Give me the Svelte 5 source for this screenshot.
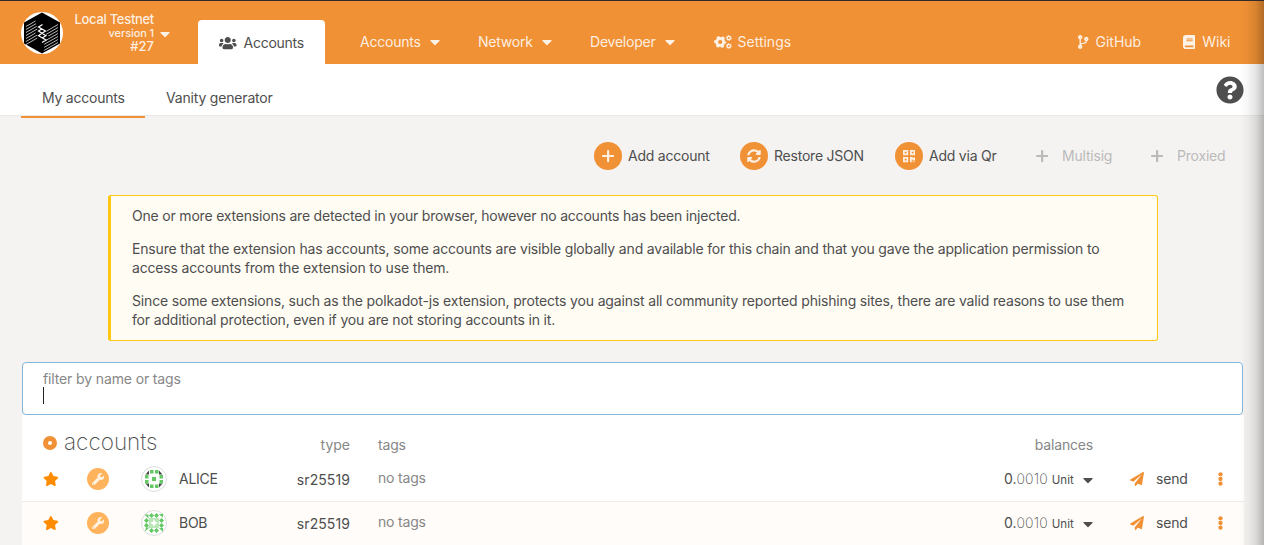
<script>
  const icons = {
    users: [640, 'M96 224c35.3 0 64-28.7 64-64s-28.7-64-64-64-64 28.7-64 64 28.7 64 64 64zm448 0c35.3 0 64-28.7 64-64s-28.7-64-64-64-64 28.7-64 64 28.7 64 64 64zm32 32h-64c-17.6 0-33.5 7.1-45.1 18.6 40.3 22.1 68.9 62 75.1 109.4h66c17.7 0 32-14.3 32-32v-32c0-35.3-28.7-64-64-64zm-256 0c61.9 0 112-50.1 112-112S381.9 32 320 32 208 82.1 208 144s50.1 112 112 112zm76.8 32h-8.3c-20.8 10-43.9 16-68.5 16s-47.6-6-68.5-16h-8.3C179.6 288 128 339.6 128 403.2V432c0 26.5 21.5 48 48 48h288c26.5 0 48-21.5 48-48v-28.8c0-63.6-51.6-115.2-115.2-115.2zm-223.7-13.4C161.5 263.1 145.6 256 128 256H64c-35.3 0-64 28.7-64 64v32c0 17.7 14.3 32 32 32h65.9c6.3-47.4 34.9-87.3 75.2-109.4z'],
    star: [576, 'M259.3 17.8L194 150.2 47.9 171.5c-26.2 3.8-36.7 36.1-17.7 54.6l105.7 103-25 145.5c-4.5 26.3 23.2 46 46.4 33.7L288 439.6l130.7 68.7c23.2 12.2 50.9-7.4 46.4-33.7l-25-145.5 105.7-103c19-18.5 8.5-50.8-17.7-54.6L382 150.2 316.7 17.8c-11.7-23.6-45.6-23.9-57.4 0z'],
    wrench: [512, 'M507.73 109.1c-2.24-9.03-13.54-12.09-20.12-5.51l-74.36 74.36-67.88-11.31-11.31-67.88 74.36-74.36c6.62-6.62 3.43-17.9-5.66-20.16-47.38-11.74-99.55.91-136.58 37.93-39.64 39.64-50.55 97.1-34.05 147.2L18.74 402.76c-24.99 24.99-24.99 65.51 0 90.5 24.99 24.99 65.51 24.99 90.5 0l213.21-213.21c50.12 16.71 107.47 5.68 147.37-34.22 37.07-37.07 49.7-89.32 37.91-136.73zM64 472c-13.25 0-24-10.75-24-24 0-13.26 10.75-24 24-24s24 10.74 24 24c0 13.25-10.75 24-24 24z'],
    plus: [448, 'M416 216H264V64c0-17.67-14.33-32-32-32h-16c-17.67 0-32 14.33-32 32v152H32c-17.67 0-32 14.33-32 32v16c0 17.67 14.33 32 32 32h152v152c0 17.67 14.33 32 32 32h16c17.67 0 32-14.33 32-32V296h152c17.67 0 32-14.33 32-32v-16c0-17.67-14.33-32-32-32z'],
    help: [512, 'M504 256c0 136.997-111.043 248-248 248S8 392.997 8 256C8 119.083 119.043 8 256 8s248 111.083 248 248zM262.655 90c-54.497 0-89.255 22.957-116.549 63.758-3.536 5.286-2.353 12.415 2.715 16.258l34.699 26.31c5.205 3.947 12.621 3.008 16.665-2.122 17.864-22.658 30.113-35.797 57.303-35.797 20.429 0 45.698 13.148 45.698 32.958 0 14.976-12.363 22.667-32.534 33.976C247.128 238.528 216 254.941 216 296v4c0 6.627 5.373 12 12 12h56c6.627 0 12-5.373 12-12v-1.333c0-28.462 83.186-29.647 83.186-106.667 0-58.002-60.165-102-116.531-102zM256 338c-25.365 0-46 20.635-46 46 0 25.364 20.635 46 46 46s46-20.636 46-46c0-25.365-20.635-46-46-46z'],
    branch: [384, 'M384 144c0-44.2-35.8-80-80-80s-80 35.8-80 80c0 36.4 24.3 67.1 57.5 76.8-.6 16.1-4.2 28.5-11 36.9-15.4 19.2-49.3 22.4-85.2 25.7-28.2 2.6-57.4 5.4-81.3 16.9v-144c32.5-10.2 56-40.5 56-76.3 0-44.2-35.8-80-80-80S0 35.8 0 80c0 35.8 23.5 66.1 56 76.3v199.3C23.5 365.9 0 396.2 0 432c0 44.2 35.8 80 80 80s80-35.8 80-80c0-34-21.2-63.1-51.2-74.6 3.1-5.2 7.8-9.8 14.9-13.4 16.2-8.2 40.4-10.4 66.1-12.8 42.2-3.9 90-8.4 118.2-43.4 14-17.4 21.1-39.8 21.6-67.9 31.6-10.8 54.4-40.7 54.4-75.9zM80 64c8.8 0 16 7.2 16 16s-7.2 16-16 16-16-7.2-16-16 7.2-16 16-16zm0 384c-8.8 0-16-7.2-16-16s7.2-16 16-16 16 7.2 16 16-7.2 16-16 16zm224-320c8.8 0 16 7.2 16 16s-7.2 16-16 16-16-7.2-16-16 7.2-16 16-16z'],
    book: [448, 'M448 360V24c0-13.3-10.7-24-24-24H96C43 0 0 43 0 96v320c0 53 43 96 96 96h328c13.3 0 24-10.7 24-24v-16c0-7.5-3.5-14.3-8.9-18.7-4.2-15.4-4.2-59.3 0-74.7 5.4-4.3 8.9-11.1 8.9-18.6zM128 134c0-3.3 2.7-6 6-6h212c3.3 0 6 2.7 6 6v20c0 3.3-2.7 6-6 6H134c-3.3 0-6-2.7-6-6v-20zm0 64c0-3.3 2.7-6 6-6h212c3.3 0 6 2.7 6 6v20c0 3.3-2.7 6-6 6H134c-3.3 0-6-2.7-6-6v-20zm253.4 250H96c-17.7 0-32-14.3-32-32 0-17.6 14.4-32 32-32h285.4c-1.9 17.1-1.9 46.9 0 64z'],
    plane: [512, 'M476 3.2L12.5 270.6c-18.1 10.4-15.8 35.6 2.2 43.2L121 358.4l287.3-253.2c5.5-4.9 13.3 2.6 8.6 8.3L176 407v80.5c0 23.6 28.5 32.9 42.5 15.8L282 426l124.6 52.2c14.2 6 30.4-2.9 33-18.2l72-432C515 7.8 493.3-6.8 476 3.2z'],
    caret: [320, 'M31.3 192h257.3c17.8 0 26.7 21.5 14.1 34.1L174.1 354.8c-7.8 7.8-20.5 7.8-28.3 0L17.2 226.1C4.6 213.5 13.5 192 31.3 192z'],
    sync: [512, 'M370.72 133.28C339.458 104.008 298.888 87.962 255.848 88c-77.458.068-144.328 53.178-162.791 126.85-1.344 5.363-6.122 9.15-11.651 9.15H24.103c-7.498 0-13.194-6.807-11.807-14.176C33.933 94.924 134.813 8 256 8c66.448 0 126.791 26.136 171.315 68.685L463.03 40.97C478.149 25.851 504 36.559 504 57.941V192c0 13.255-10.745 24-24 24H345.941c-21.382 0-32.09-25.851-16.971-40.971l41.75-41.749zM32 296h134.059c21.382 0 32.09 25.851 16.971 40.971l-41.75 41.75c31.262 29.273 71.835 45.319 114.876 45.28 77.418-.07 144.315-53.144 162.787-126.849 1.344-5.363 6.122-9.15 11.651-9.15h57.304c7.498 0 13.194 6.807 11.807 14.176C478.067 417.076 377.187 504 256 504c-66.448 0-126.791-26.136-171.315-68.685L48.97 471.03C33.851 486.149 8 475.441 8 454.059V320c0-13.255 10.745-24 24-24z'],
    qr: [448, 'M0 224h192V32H0v192zM64 96h64v64H64V96zm192-64v192h192V32H256zm128 128h-64V96h64v64zM0 480h192V288H0v192zm64-128h64v64H64v-64zm352-64h32v128h-96v-32h-32v96h-64V288h96v32h64v-32zm0 160h32v32h-32v-32zm-64 0h32v32h-32v-32z']
  };

  const menus = [
    { name: 'Accounts', width: 118 },
    { name: 'Network', width: 112 },
    { name: 'Developer', width: 123.5 }
  ];
  const actions = [
    { label: 'Add account', icon: 'plus', width: 146 },
    { label: 'Restore JSON', icon: 'sync', width: 155 },
    { label: 'Add via Qr', icon: 'qr', width: 133 },
    { label: 'Multisig', icon: 'plus', width: 115, disabled: true },
    { label: 'Proxied', icon: 'plus', width: 88, disabled: true }
  ];
  const accounts = [{ name: 'ALICE' }, { name: 'BOB' }];
  const hatch = Array.from({ length: 7 }, (_, i) => i * 3);
</script>

{#snippet icon(name, size)}
  <svg class="icon" viewBox="0 0 {icons[name][0]} 512" height={size} width={(size * icons[name][0]) / 512} fill="currentColor" aria-hidden="true">
    <path d={icons[name][1]} />
  </svg>
{/snippet}

<div class="page">
  <header>
    <div class="chain">
      <svg class="logo" width="42" height="42" viewBox="0 0 42 42" aria-hidden="true">
        <circle cx="21" cy="21" r="21" fill="#fff" />
        <path d="M21 .5L39 10.5v21L21 41.500 3 31.500v-21z" fill="#000" />
        <g stroke="#fff" stroke-width=".9">
          {#each hatch as y}
            <path d="M5 {14.500 + y}L{14.500 + Math.min(y, 9) * 0.2} {9 + y - Math.min(y, 9) * 0.11}" opacity=".8" />
            <path d="M{25.500 - Math.min(y, 12) * 0.2} {19.200 + y + Math.min(y, 12) * 0.1}L37 {12.500 + y}" opacity=".8" />
          {/each}
        </g>
        <path d="M18 14l5 3-5 4 6 4-5 4" fill="none" stroke="#000" stroke-width="5" />
        <path d="M21.500 12.500l-4 2.500 7 4-3.500 2.200-3.500-2.200 3.500-2.200M21 21.200l-3.500 2.500 7.500 4.300-4 2.500M21 21.200l4 2.500-4 2.300" fill="none" stroke="#fff" stroke-width="1.200" />
      </svg>
      <div class="chain-info">
        <div class="chain-name">Local Testnet</div>
        <div class="small">version 1</div>
        <div class="block">#27</div>
      </div>
      {@render icon('caret', 16)}
    </div>
    <div class="active-tab">{@render icon('users', 14)}<span>Accounts</span></div>
    <nav>
      {#each menus as menu}
        <div class="menu" style="width: {menu.width}px"><span>{menu.name}</span>{@render icon('caret', 16)}</div>
      {/each}
      <div class="settings">
        <svg width="18" height="14" viewBox="0 0 18 14" fill="none" stroke="currentColor" aria-hidden="true">
          <circle cx="6.200" cy="7" r="3.500" stroke-width="2.800" />
          <circle cx="6.200" cy="7" r="5.200" stroke-width="1.800" stroke-dasharray="2.700 2.745" stroke-dashoffset="1.350" />
          <circle cx="14.800" cy="3" r="1.700" stroke-width="1.300" />
          <circle cx="14.800" cy="3" r="2.500" stroke-width=".9" stroke-dasharray="1.300 1.318" />
          <circle cx="14.800" cy="11" r="1.700" stroke-width="1.300" />
          <circle cx="14.800" cy="11" r="2.500" stroke-width=".9" stroke-dasharray="1.300 1.318" />
        </svg>
        <span>Settings</span>
      </div>
    </nav>
    <div class="links">
      <div class="github">{@render icon('branch', 14)}<span>GitHub</span></div>
      <div class="wiki">{@render icon('book', 14)}<span>Wiki</span></div>
    </div>
  </header>

  <div class="tabs">
    <div class="tab selected">My accounts</div>
    <div class="tab">Vanity generator</div>
    <div class="help">{@render icon('help', 28)}</div>
  </div>

  <main>
    <div class="actions">
      {#each actions as action}
        <div class="action" class:disabled={action.disabled} style="width: {action.width}px">
          <span class="disc">{@render icon(action.icon, 14)}</span>
          <span class="label">{action.label}</span>
        </div>
      {/each}
    </div>

    <article>
      <p class="first">One or more extensions are detected in your browser, however no accounts has been injected.</p>
      <p>Ensure that the extension has accounts, some accounts are visible globally and available for this chain and that you gave the application permission to<br />access accounts from the extension to use them.</p>
      <p>Since some extensions, such as the polkadot-js extension, protects you against all community reported phishing sites, there are valid reasons to use them<br />for additional protection, even if you are not storing accounts in it.</p>
    </article>

    <div class="filter">
      <div>filter by name or tags</div>
      <div class="caret"></div>
    </div>

    <section>
      <div class="row head">
        <div class="title"><i></i><h1>accounts</h1></div>
        <div class="type">type</div>
        <div class="tags">tags</div>
        <div class="balances">balances</div>
      </div>
      {#each accounts as account, n}
        <div class="row" class:odd={n === 1}>
          <div class="star">{@render icon('star', 14)}</div>
          <div class="badge">{@render icon('wrench', 12.500)}</div>
          <svg class="identicon" width="26" height="26" viewBox="0 0 26 26" aria-hidden="true">
            <circle cx="13" cy="13" r="12.500" fill="#fff" stroke="#dcdcdc" />
            {#if n === 0}
              <path d="M4.500 8.500L8 8.500V4.500zM18 4.500v4h3.500zM4.500 17.500H8v4zM18 17.500h3.500l-3.500 4z" fill="#444" />
              <path d="M9 4h3.500v3.500H9zM14 4h3.500v3.500H14zM9 18.500h3.500V22H9zM14 18.500h3.500V22H14zM4 9h3.500v3.500H4zM4 14h3.500v3.500H4zM18.500 9H22v3.500h-3.500zM18.500 14H22v3.500h-3.500zM11 11h4v4h-4z" fill="#64c864" />
            {:else}
              <rect x="8" y="8" width="10" height="10" fill="#b8e6b6" />
              <path d="M13 9l1.200 2.800L17 13l-2.800 1.200L13 17l-1.200-2.800L9 13l2.800-1.200z" fill="#fff" />
              <path d="M3.500 4.500h4v4zM18 4.500l4-1v4zM4 21.500l1-4h3.500zM18 18h4v4z" fill="#64c864" />
              {#each [10.500, 15.500] as p}
                <path d="M{p} 3l2.500 2.500-2.500 2.500-2.500-2.500zM{p} 18l2.500 2.500-2.500 2.500-2.500-2.500zM5.500 {p - 2.500}l2.500 2.500-2.500 2.500-2.500-2.500zM20.500 {p - 2.500}l2.500 2.500-2.500 2.500-2.500-2.500z" fill="#64c864" />
              {/each}
            {/if}
          </svg>
          <div class="name">{account.name}</div>
          <div class="type">sr25519</div>
          <div class="tags">no tags</div>
          <div class="balance"><span>0.</span><span class="fraction">0010</span><span class="unit">Unit</span></div>
          <div class="expand">{@render icon('caret', 16)}</div>
          <div class="send">{@render icon('plane', 14)}<span>send</span></div>
          <svg class="dots" width="5" height="14" viewBox="0 0 5 14" fill="#f19135" aria-hidden="true">
            <circle cx="2.500" cy="2.300" r="2.150" /><circle cx="2.500" cy="7" r="2.150" /><circle cx="2.500" cy="11.700" r="2.150" />
          </svg>
        </div>
      {/each}
    </section>
  </main>
  <div class="edge"></div>
</div>

<style>
  :global(body) { background: #f4f3f1; overflow: hidden; }
  .page { position: relative; width: 1264px; height: 545px; overflow: hidden; background: #f4f3f1; color: #4e4e4e; font: 14px/19px Inter, sans-serif; letter-spacing: -.18px; }
  .page * { box-sizing: border-box; }
  .icon { display: block; flex: none; }
  span { white-space: nowrap; }
  header { display: flex; height: 64px; background: #f19135; border-top: 1px solid #302a2b; color: rgba(255, 255, 255, .87); }
  header span, .label { padding-bottom: 2px; }
  .chain { display: flex; width: 198px; padding: 11px 0 0 21px; }
  .logo { flex: none; }
  .chain-info { width: 91px; text-align: right; font-size: 13px; line-height: 15px; letter-spacing: 0; font-weight: 450; }
  .chain-name { letter-spacing: -.3px; }
  .chain-info .small { font-size: 11px; line-height: 13px; letter-spacing: -.1px; }
  .chain-info .block { line-height: 13px; }
  .chain .icon { margin: 14px 0 0 6px; }
  .active-tab { display: flex; align-items: center; width: 127px; height: 44px; margin-top: 19px; padding: 2px 0 0 21px; gap: 7px; background: #fff; border-radius: 4px 4px 0 0; color: #4e4e4e; letter-spacing: -.25px; }
  nav { display: flex; padding: 19px 0 0 35px; height: 63px; }
  .menu, .settings { display: flex; align-items: center; height: 44px; }
  .menu { letter-spacing: -.22px; }
  .menu .icon { margin-left: 9px; }
  .settings { gap: 6px; letter-spacing: 0; }
  .links { display: flex; margin-left: auto; padding-top: 19px; letter-spacing: 0; }
  .github, .wiki { display: flex; align-items: center; height: 44px; gap: 7px; }
  .github { width: 105px; }
  .wiki { width: 81px; }
  .tabs { display: flex; height: 52px; background: #fff; border-bottom: 1px solid #ebeaea; padding-left: 21px; }
  .tab { height: 54px; padding: 24px 21px 0; white-space: nowrap; }
  .selected { width: 124px; border-bottom: 2px solid #f19135; position: relative; letter-spacing: -.23px; }
  .help { margin: 12px 20px 0 auto; }
  .actions { display: flex; height: 79px; padding: 26px 0 0 594px; letter-spacing: -.22px; }
  .action { display: flex; height: 28px; align-items: center; gap: 6px; }
  .disc { display: flex; width: 28px; height: 28px; border-radius: 50%; background: #f19135; align-items: center; justify-content: center; color: rgba(255, 255, 255, .85); }
  .disabled { color: #bbbaba; letter-spacing: -.2px; }
  .disabled .disc { background: none; color: #bbbaba; }
  article { width: 1050px; height: 146px; margin-left: 108px; border: 1px solid #ffc711; border-left-width: 3px; border-radius: 3px; background: #fffcf4; padding: 10px 0 0 21px; letter-spacing: -.165px; }
  p { margin: 0 0 14px; white-space: nowrap; }
  .first { letter-spacing: -.195px; }
  .filter { width: 1221px; height: 53px; margin: 21px 0 0 22px; border: 1px solid #85b7d9; border-radius: 4px; background: #fff; color: #878787; padding: 6px 20px 0; letter-spacing: -.13px; }
  .caret { width: 1px; height: 17px; background: #222; margin-top: -1px; }
  section { width: 1222px; margin-left: 22px; background: #fff; }
  .row { display: flex; height: 44px; align-items: center; border-bottom: 1px solid #ececec; padding-bottom: 1px; }
  .odd { background: #fffcf9; }
  .head { height: 43px; border: 0; color: #878787; padding-top: 16px; }
  .title { display: flex; align-items: center; width: 248px; padding-left: 21px; gap: 7px; margin-top: -3px; }
  .title i { width: 14px; height: 14px; border: 5px solid #f19135; border-radius: 50%; background: #fff; }
  h1 { font-size: 22.5px; font-weight: 200; line-height: 26px; margin: -2px 0 0; color: #4e4e4e; letter-spacing: 0; }
  .star { width: 65px; padding-left: 21px; color: #ff8c00; }
  .badge { display: flex; width: 22px; height: 22px; border-radius: 50%; background: #ffb35c; color: #fff0e0; align-items: center; justify-content: center; }
  .identicon { margin-left: 32px; }
  .name { width: 103px; padding: 0 0 2px 12px; letter-spacing: -.25px; }
  .type { width: 80px; text-align: right; letter-spacing: 0; }
  .tags { width: 200px; padding-left: 28px; color: #878787; }
  .row:not(.head) .tags { margin-top: -4px; }
  .row:not(.head) .type { letter-spacing: .08px; }
  .balances { margin-left: 443px; width: 100px; text-align: right; }
  .balance { width: 70px; margin: 1px 0 0 454px; white-space: nowrap; display: flex; align-items: baseline; letter-spacing: 0; }
  .fraction { font-weight: 200; letter-spacing: .15px; }
  .unit { font-size: 11.500px; margin-left: 4px; }
  .expand { width: 56px; padding: 1px 0 0 9px; }
  .send { display: flex; align-items: center; gap: 12px; width: 88px; }
  .send span { padding-bottom: 2px; }
  .send .icon { color: #f19135; }
  .edge { position: absolute; right: 0; top: 1px; bottom: 0; width: 24px; background: linear-gradient(to right, transparent, rgba(0, 0, 0, .03) 30%, rgba(0, 0, 0, .1) 65%, rgba(0, 0, 0, .26)); }
</style>
